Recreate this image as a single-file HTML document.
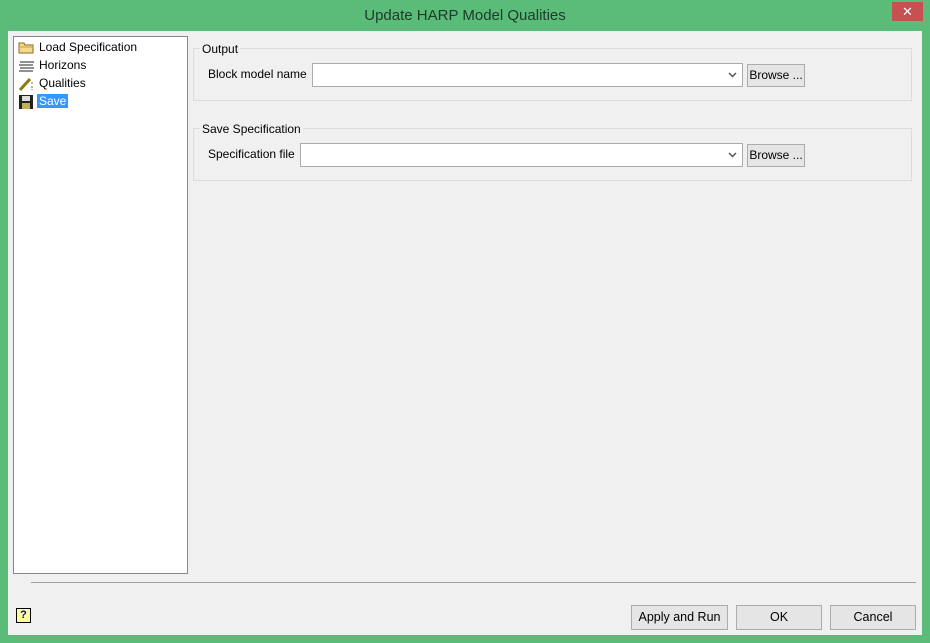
<!DOCTYPE html>
<html><head><meta charset="utf-8"><style>
*{box-sizing:border-box;margin:0;padding:0}
body{width:930px;height:643px;background:#5bbb79;font-family:"Liberation Sans",sans-serif;font-size:12px;color:#000;position:relative;overflow:hidden}
.abs{position:absolute}
.title{left:0;top:7px;width:930px;text-align:center;font-size:15px;color:#1e3a28}
.close{left:892px;top:2px;width:31px;height:19px;background:#c75050;color:#fff;text-align:center;font-size:13px;line-height:19px}
.client{left:8px;top:31px;width:914px;height:604px;background:#f0f0f0}
.tree{left:13px;top:36px;width:175px;height:538px;background:#fff;border:1px solid #828790}
.item{position:absolute;left:4px;height:17px;line-height:17px}
.item span{margin-left:19px;padding:0 2px}
.grp{border:1px solid #dcdcdc}
.lbl{background:#f0f0f0;padding:0 2px}
.combo{background:#fff;border:1px solid #acacac;height:24px}
.btn{background:#e5e5e5;border:1px solid #acacac;text-align:center}
</style></head><body>
<div class="abs title">Update HARP Model Qualities</div>
<div class="abs close">✕</div>
<div class="abs client"></div>
<div class="abs tree">
 <div class="item" style="top:2px"><svg class="abs" style="left:0;top:2px" width="17" height="13"><path d="M1 2h5l1 2h8v8H1z" fill="#f6d98a" stroke="#8a6a2a"/><path d="M1 6h14" stroke="#c9a04a"/></svg><span>Load Specification</span></div>
 <div class="item" style="top:20px"><svg class="abs" style="left:0;top:3px" width="17" height="12"><path d="M2 2h14M1 5h14M2 8h14M1 11h14" stroke="#222"/></svg><span>Horizons</span></div>
 <div class="item" style="top:38px"><svg class="abs" style="left:0;top:1px" width="17" height="15"><path d="M2 14L12 3" stroke="#8a7a10" stroke-width="3"/><path d="M14 6v2M14 10v2M14 13v1" stroke="#8a7a10"/></svg><span>Qualities</span></div>
 <div class="item" style="top:56px"><svg class="abs" style="left:0;top:1px" width="16" height="16"><rect x="1" y="1" width="14" height="14" fill="#222"/><rect x="4" y="2" width="8" height="5" fill="#ddd"/><rect x="4" y="9" width="8" height="6" fill="#bdb25a"/></svg><span style="background:#3399ff;color:#fff">Save</span></div>
</div>
<div class="abs grp" style="left:193px;top:48px;width:719px;height:53px"></div>
<div class="abs lbl" style="left:200px;top:42px">Output</div>
<div class="abs" style="left:208px;top:67px">Block model name</div>
<div class="abs combo" style="left:312px;top:63px;width:431px"><svg class="abs" style="right:5px;top:8px" width="9" height="6"><path d="M1 1l3.5 3.5L8 1" stroke="#555" stroke-width="1.5" fill="none"/></svg></div>
<div class="abs btn" style="left:747px;top:64px;width:58px;height:23px;line-height:21px">Browse ...</div>
<div class="abs grp" style="left:193px;top:128px;width:719px;height:53px"></div>
<div class="abs lbl" style="left:200px;top:122px">Save Specification</div>
<div class="abs" style="left:208px;top:147px">Specification file</div>
<div class="abs combo" style="left:300px;top:143px;width:443px"><svg class="abs" style="right:5px;top:8px" width="9" height="6"><path d="M1 1l3.5 3.5L8 1" stroke="#555" stroke-width="1.5" fill="none"/></svg></div>
<div class="abs btn" style="left:747px;top:144px;width:58px;height:23px;line-height:21px">Browse ...</div>
<div class="abs" style="left:31px;top:582px;width:885px;height:1px;background:#a0a0a0"></div>
<div class="abs" style="left:16px;top:608px;width:15px;height:15px;border:1px solid #000;background:#ffff99;font-size:11px;font-weight:bold;color:#00a;text-align:center;line-height:13px">?</div>
<div class="abs btn" style="left:631px;top:605px;width:97px;height:25px;line-height:23px;font-size:12.5px">Apply and Run</div>
<div class="abs btn" style="left:736px;top:605px;width:86px;height:25px;line-height:23px;font-size:12.5px">OK</div>
<div class="abs btn" style="left:830px;top:605px;width:86px;height:25px;line-height:23px;font-size:12.5px">Cancel</div>
</body></html>
